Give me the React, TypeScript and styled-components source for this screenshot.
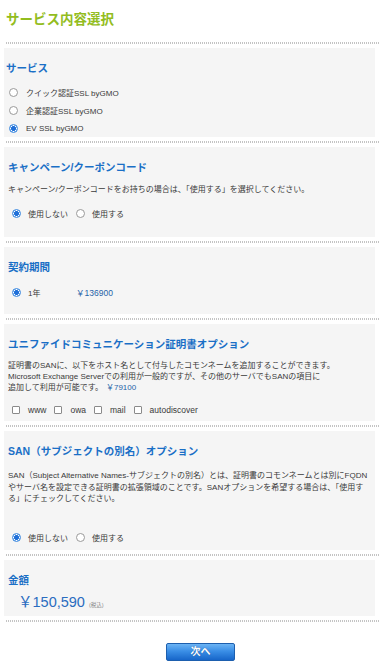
import React from "react";
import styled, { createGlobalStyle } from "styled-components";

const Global = createGlobalStyle`
  html, body { margin: 0; padding: 0; background: #fff; }
  body {
    font-family: "Liberation Sans", Arial, "Noto Sans CJK JP", sans-serif;
    color: #333;
  }
`;

const Page = styled.div`
  width: 380px;
  padding-bottom: 20px;
`;

const Title = styled.h1`
  margin: 0 0 14px;
  padding: 12px 6px 0;
  font-size: 13.5px;
  line-height: 16px;
  font-weight: bold;
  color: #93bd1e;
`;

const Dots = styled.div`
  height: 2px;
  margin: 4px 0 4px 6px;
  background: repeating-linear-gradient(to right, #c4c4c4 0 1px, transparent 1px 2px);
`;

const Box = styled.section<{ $pb: number; $pl?: number }>`
  margin: 0 5px 0 4px;
  padding: 14px 4px ${(p) => p.$pb}px ${(p) => p.$pl ?? 4}px;
  background: #f5f5f5;
`;

const Heading = styled.h2<{ $mb: number }>`
  margin: 0 0 ${(p) => p.$mb}px;
  font-size: 10.5px;
  line-height: 13px;
  font-weight: bold;
  color: #1a6fc6;
`;

const Desc = styled.p<{ $lh: number; $mb: number }>`
  margin: 0 0 ${(p) => p.$mb}px;
  font-size: 8px;
  line-height: ${(p) => p.$lh}px;
  color: #3a3a3a;
  white-space: nowrap;
`;

const Price = styled.span`
  color: #2563a8;
  margin-left: 3px;
`;

const Column = styled.div<{ $pl: number }>`
  display: flex;
  flex-direction: column;
  padding-left: ${(p) => p.$pl}px;
`;

const Inline = styled.div<{ $pl: number; $gap: number }>`
  display: flex;
  align-items: center;
  height: 18px;
  gap: ${(p) => p.$gap}px;
  padding-left: ${(p) => p.$pl}px;
`;

const Option = styled.label<{ $gap: number; $fs?: number }>`
  display: flex;
  align-items: center;
  height: 18px;
  gap: ${(p) => p.$gap}px;
  font-size: ${(p) => p.$fs ?? 8}px;
  color: #3a3a3a;
  white-space: nowrap;
`;

const Radio = styled.input.attrs({ type: "radio" })`
  appearance: none;
  -webkit-appearance: none;
  margin: 0;
  width: 9px;
  height: 9px;
  box-sizing: border-box;
  border-radius: 50%;
  border: 1px solid #9a9a9a;
  background: #fff;
  flex: none;
  &:checked {
    border-color: #3d8ae0;
    background: radial-gradient(circle, #1f6fd8 0 2.2px, #fff 2.6px 3px, #8fbcf0 3.2px);
  }
`;

const Check = styled.input.attrs({ type: "checkbox" })`
  appearance: none;
  -webkit-appearance: none;
  margin: 0;
  width: 8px;
  height: 8px;
  box-sizing: border-box;
  border: 1px solid #8a8a8a;
  border-radius: 1px;
  background: #fff;
  flex: none;
`;

const Term = styled.span`
  display: inline-block;
  width: 41px;
`;

const TermPrice = styled.span`
  font-size: 8.5px;
  color: #2563a8;
`;

const Total = styled.div`
  display: flex;
  align-items: baseline;
  padding-left: 10px;
  height: 16px;
  line-height: 16px;
`;

const TotalAmount = styled.span`
  font-size: 14.5px;
  color: #2a6cc0;
`;

const Tax = styled.span`
  margin-left: 4px;
  font-size: 5.5px;
  color: #888;
`;

const Actions = styled.div`
  display: flex;
  padding-left: 166px;
  margin-top: 21px;
`;

const NextButton = styled.button`
  width: 69px;
  height: 18px;
  padding: 0;
  border: 1px solid #1d5fae;
  border-radius: 2px;
  background: linear-gradient(to bottom, #6cb4f4 0%, #3a8ee6 45%, #1766c9 100%);
  color: #fff;
  font-family: "Liberation Sans", "Noto Sans CJK JP", sans-serif;
  font-size: 10px;
  font-weight: bold;
  line-height: 16px;
  text-shadow: 0 0 1px rgba(0, 40, 100, 0.6);
  cursor: pointer;
`;

export default function App() {
  return (
    <Page>
      <Global />
      <Title>サービス内容選択</Title>
      <Dots />

      <Box $pb={0} $pl={2}>
        <Heading $mb={8}>サービス</Heading>
        <Column $pl={3}>
          <Option $gap={8}>
            <Radio name="service" />
            クイック認証SSL byGMO
          </Option>
          <Option $gap={8}>
            <Radio name="service" />
            企業認証SSL byGMO
          </Option>
          <Option $gap={8}>
            <Radio name="service" defaultChecked />
            EV SSL byGMO
          </Option>
        </Column>
      </Box>
      <Dots />

      <Box $pb={15}>
        <Heading $mb={10}>キャンペーン/クーポンコード</Heading>
        <Desc $lh={12} $mb={8}>
          キャンペーン/クーポンコードをお持ちの場合は、「使用する」を選択してください。
        </Desc>
        <Inline $pl={4} $gap={8}>
          <Option $gap={7}>
            <Radio name="coupon" defaultChecked />
            使用しない
          </Option>
          <Option $gap={7}>
            <Radio name="coupon" />
            使用する
          </Option>
        </Inline>
      </Box>
      <Dots />

      <Box $pb={13}>
        <Heading $mb={9}>契約期間</Heading>
        <Inline $pl={4} $gap={8}>
          <Option $gap={7}>
            <Radio name="term" defaultChecked />
            <Term>1年</Term>
            <TermPrice>￥136900</TermPrice>
          </Option>
        </Inline>
      </Box>
      <Dots />

      <Box $pb={2}>
        <Heading $mb={9}>ユニファイドコミュニケーション証明書オプション</Heading>
        <Desc $lh={11} $mb={8}>
          証明書のSANに、以下をホスト名として付与したコモンネームを追加することができます。
          <br />
          Microsoft Exchange Serverでの利用が一般的ですが、その他のサーバでもSANの項目に
          <br />
          追加して利用が可能です。<Price>￥79100</Price>
        </Desc>
        <Inline $pl={4} $gap={8}>
          <Option $gap={8} $fs={8.5}>
            <Check />
            www
          </Option>
          <Option $gap={8} $fs={8.5}>
            <Check />
            owa
          </Option>
          <Option $gap={8} $fs={8.5}>
            <Check />
            mail
          </Option>
          <Option $gap={8} $fs={8.5}>
            <Check />
            autodiscover
          </Option>
        </Inline>
      </Box>
      <Dots />

      <Box $pb={3}>
        <Heading $mb={12}>SAN（サブジェクトの別名）オプション</Heading>
        <Desc $lh={11.5} $mb={24}>
          SAN（Subject Alternative Names-サブジェクトの別名）とは、証明書のコモンネームとは別にFQDN
          <br />
          やサーバ名を設定できる証明書の拡張領域のことです。SANオプションを希望する場合は、「使用す
          <br />
          る」にチェックしてください。
        </Desc>
        <Inline $pl={4} $gap={8}>
          <Option $gap={7}>
            <Radio name="san" defaultChecked />
            使用しない
          </Option>
          <Option $gap={7}>
            <Radio name="san" />
            使用する
          </Option>
        </Inline>
      </Box>
      <Dots />

      <Box $pb={6}>
        <Heading $mb={7}>金額</Heading>
        <Total>
          <TotalAmount>￥150,590</TotalAmount>
          <Tax>(税込)</Tax>
        </Total>
      </Box>
      <Dots />

      <Actions>
        <NextButton type="button">次へ</NextButton>
      </Actions>
    </Page>
  );
}
